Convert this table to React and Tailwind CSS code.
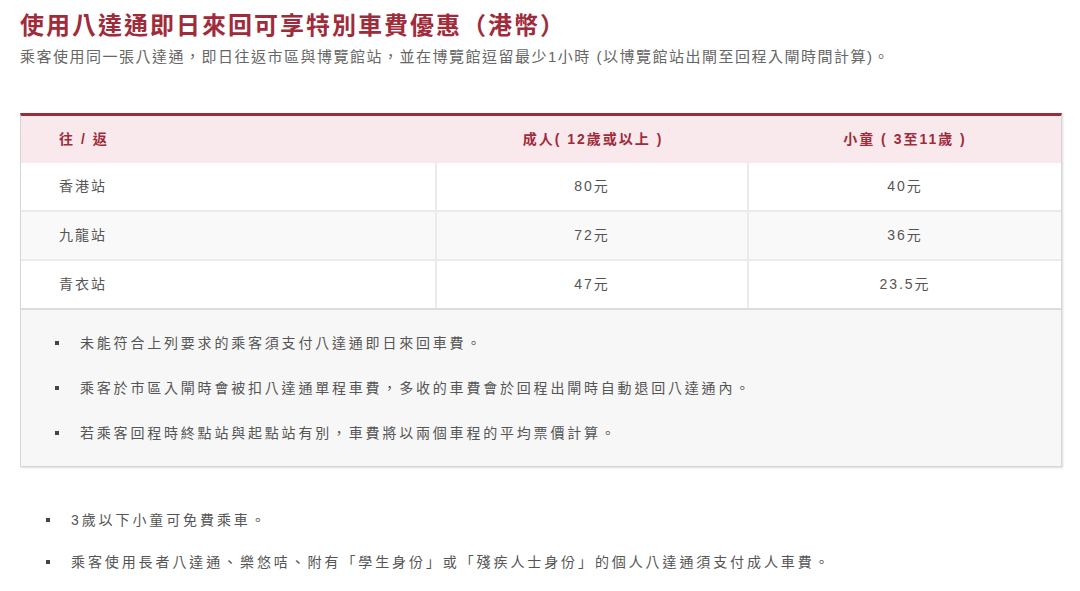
export default function App() {
  const font = { fontFamily: '"Liberation Sans", "Noto Sans CJK TC", sans-serif' };
  const rows = [
    ["香港站", "80元", "40元"],
    ["九龍站", "72元", "36元"],
    ["青衣站", "47元", "23.5元"],
  ];
  const notes = [
    "未能符合上列要求的乘客須支付八達通即日來回車費。",
    "乘客於市區入閘時會被扣八達通單程車費，多收的車費會於回程出閘時自動退回八達通內。",
    "若乘客回程時終點站與起點站有別，車費將以兩個車程的平均票價計算。",
  ];
  const foot = [
    "3歲以下小童可免費乘車。",
    "乘客使用長者八達通、樂悠咭、附有「學生身份」或「殘疾人士身份」的個人八達通須支付成人車費。",
  ];
  return (
    <div className="w-[1080px] h-[591px] bg-white overflow-hidden" style={font}>
      <div className="pl-5 pr-[18px] pt-[10px]">
        <h1 className="text-[24px] leading-[32px] font-bold text-[#9f2b3b] tracking-[2px]">
          使用八達通即日來回可享特別車費優惠（港幣）
        </h1>
        <p className="mt-[3px] text-[15px] leading-[24px] text-[#666] tracking-[1.5px]">
          乘客使用同一張八達通，即日往返市區與博覽館站，並在博覽館逗留最少1小時 (以博覽館站出閘至回程入閘時間計算)。
        </p>

        <div className="mt-[44px] w-[1042px] border-t-[3px] border-t-[#9b2d3b] border-x border-b border-x-[#d6d6d6] border-b-[#d6d6d6] shadow-[1px_1px_2px_rgba(0,0,0,0.15)]">
          <div className="grid grid-cols-[416px_312px_1fr] h-[47px] bg-[#f9e9ec] text-[14px] font-bold text-[#9f2b3b] tracking-[2px] items-center">
            <div className="pl-[38px]">往 / 返</div>
            <div className="text-center">成人( 12歲或以上 )</div>
            <div className="text-center">小童 ( 3至11歲 )</div>
          </div>
          {rows.map((r, i) => (
            <div
              key={i}
              className={
                "grid grid-cols-[416px_312px_1fr] h-[49px] text-[14px] text-[#555] tracking-[2px] " +
                (i % 2 === 1 ? "bg-[#f9f9f9] " : "bg-white ") +
                (i < 2 ? "border-b-2 border-[#ebebeb]" : "border-b-2 border-[#dcdcdc]")
              }
            >
              <div className="pl-[38px] flex items-center border-r-2 border-[#ebebeb]">{r[0]}</div>
              <div className="flex items-center justify-center border-r-2 border-[#ebebeb]">{r[1]}</div>
              <div className="flex items-center justify-center">{r[2]}</div>
            </div>
          ))}
          <ul className="bg-[#f7f7f7] py-[22px] pl-[33px] flex flex-col gap-[23px] text-[14px] leading-[22px] text-[#555] tracking-[2.8px]">
            {notes.map((n, i) => (
              <li key={i} className="flex items-center">
                <span className="w-[4px] h-[4px] bg-[#444] mr-[21px] ml-[1px]"></span>
                <span>{n}</span>
              </li>
            ))}
          </ul>
        </div>

        <ul className="mt-[42px] pl-[25px] flex flex-col gap-[20px] text-[14px] leading-[22px] text-[#555] tracking-[2.9px]">
          {foot.map((n, i) => (
            <li key={i} className="flex items-center">
              <span className="w-[4px] h-[4px] bg-[#444] mr-[21px] ml-[1px]"></span>
              <span>{n}</span>
            </li>
          ))}
        </ul>
      </div>
    </div>
  );
}
